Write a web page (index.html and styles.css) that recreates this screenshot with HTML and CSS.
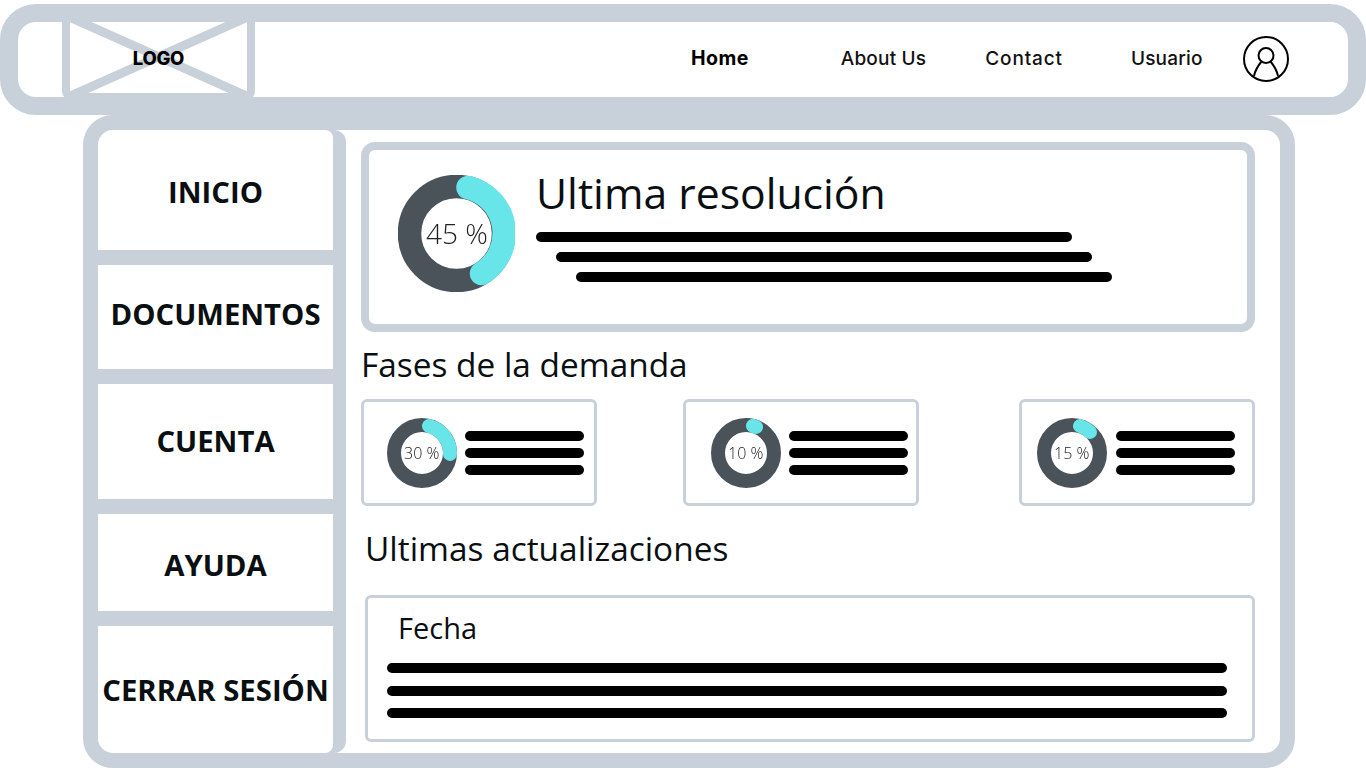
FILE: index.html
```html
<!DOCTYPE html>
<html lang="es">
<head>
<meta charset="UTF-8">
<title>Panel</title>
<link rel="stylesheet" href="styles.css">
</head>
<body>
<header class="topbar">
  <div class="logo">
    <svg class="logo-x" viewBox="0 0 177 71" width="177" height="71">
      <path d="M0 -4.7L177 74.2M177 -4.7L0 74.2"/>
    </svg>
    <span class="logo-text">LOGO</span>
  </div>
  <nav class="nav">
    <a class="nav-home">Home</a>
    <a class="nav-about">About Us</a>
    <a class="nav-contact">Contact</a>
    <a class="nav-user">Usuario</a>
  </nav>
  <svg class="user-icon" viewBox="0 0 48 48" width="48" height="48">
    <circle cx="24" cy="24" r="22"/>
    <circle cx="24" cy="20.5" r="7.5"/>
    <path d="M12 41C13.5 34 17 29.500 19.500 26.500M36 41C34.500 34 31 29.500 28.500 26.500"/>
  </svg>
</header>

<main class="frame">
  <aside class="side">
    <a class="side-item">INICIO</a>
    <a class="side-item">DOCUMENTOS</a>
    <a class="side-item">CUENTA</a>
    <a class="side-item">AYUDA</a>
    <a class="side-item">CERRAR SESIÓN</a>
  </aside>

  <section class="content">
    <div class="last-card">
      <div class="donut donut-big">
        <svg viewBox="0 0 117 117" width="117" height="117">
          <circle class="ring" cx="58.5" cy="58.5" r="47"/>
          <path class="arc" d="M70 12.500A47 47 0 0 1 83.500 98.500"/>
        </svg>
        <span class="donut-label">45 %</span>
      </div>
      <div class="last-text">
        <h1 class="last-title">Ultima resolución</h1>
        <div class="big-lines">
          <div class="line"></div>
          <div class="line line-in1"></div>
          <div class="line line-in2"></div>
        </div>
      </div>
    </div>

    <h2 class="section-title">Fases de la demanda</h2>
    <div class="phases">
      <div class="phase phase-a">
        <div class="donut donut-small">
          <svg viewBox="0 0 70 70" width="70" height="70">
            <circle class="ring" cx="35" cy="35" r="28"/>
            <path class="arc" d="M42 8A28 28 0 0 1 63 36"/>
          </svg>
          <span class="donut-label">30 %</span>
        </div>
        <div class="small-lines">
          <div class="line"></div>
          <div class="line"></div>
          <div class="line"></div>
        </div>
      </div>
      <div class="phase phase-b">
        <div class="donut donut-small">
          <svg viewBox="0 0 70 70" width="70" height="70">
            <circle class="ring" cx="35" cy="35" r="28"/>
            <path class="arc" d="M42 7.800A28 28 0 0 1 45 9"/>
          </svg>
          <span class="donut-label">10 %</span>
        </div>
        <div class="small-lines">
          <div class="line"></div>
          <div class="line"></div>
          <div class="line"></div>
        </div>
      </div>
      <div class="phase phase-c">
        <div class="donut donut-small">
          <svg viewBox="0 0 70 70" width="70" height="70">
            <circle class="ring" cx="35" cy="35" r="28"/>
            <path class="arc" d="M43 8A28 28 0 0 1 53 14"/>
          </svg>
          <span class="donut-label">15 %</span>
        </div>
        <div class="small-lines">
          <div class="line"></div>
          <div class="line"></div>
          <div class="line"></div>
        </div>
      </div>
    </div>

    <h2 class="section-title title-updates">Ultimas actualizaciones</h2>
    <div class="updates">
      <div class="updates-date">Fecha</div>
      <div class="updates-lines">
        <div class="line"></div>
        <div class="line"></div>
        <div class="line"></div>
      </div>
    </div>
  </section>
</main>
</body>
</html>
```
FILE: styles.css
```css
*{margin:0;padding:0;box-sizing:border-box}
html,body{height:768px;overflow:hidden;background:#fff}
body{font-family:"Open Sans",sans-serif;color:#0a0f12}

/* top bar */
.topbar{display:flex;align-items:center;height:111px;margin-top:4px;border:18px solid #c8d0da;border-radius:36px;background:#fff}
.logo{position:relative;display:flex;align-items:center;justify-content:center;flex:none;align-self:flex-start;width:193px;height:79px;margin:0 0 -4px 44px;border:8px solid #c8d0da;border-top-width:0;border-radius:0 0 10px 10px;background:#fff}
.logo-x{position:absolute;left:0;top:0;overflow:hidden}
.logo-x path{fill:none;stroke:#c8d0da;stroke-width:9}
.logo-text{position:relative;top:0;left:0;font:800 18.500px Inter,sans-serif;color:#000;letter-spacing:-.3px}
.nav{display:flex;align-items:center;margin:-3px 0 0 436px;font:500 19px Inter,sans-serif;letter-spacing:.2px;color:#111}
.nav-home{font-weight:700;font-size:19.500px;letter-spacing:.45px;color:#000}
.nav-about{margin-left:92px}
.nav-contact{margin-left:59px;letter-spacing:.85px}
.nav-user{margin-left:68px}
.user-icon{flex:none;margin:-1px 0 0 39px}
.user-icon circle,.user-icon path{fill:none;stroke:#000;stroke-width:2}

/* main frame */
.frame{display:flex;height:653px;width:1212px;margin-left:83px;border:15px solid #c8d0da;border-radius:30px;background:#fff;overflow:hidden}
.side{display:grid;grid-template-rows:120px 104px 115px 97px 127px;gap:15px;flex:none;width:248px;padding-right:13px;background:#c8d0da;border-radius:0 12px 12px 0}
.side-item{display:flex;align-items:center;justify-content:center;background:#fff;font-size:29.300px;font-weight:700;color:#0a0f12}
.side-item:nth-child(1){border-radius:0 8px 0 0;padding-top:4px}
.side-item:nth-child(2){padding-bottom:6px}
.side-item:nth-child(3){padding-bottom:2px}
.side-item:nth-child(4){padding-top:5px}
.side-item:nth-child(5){border-radius:0 0 8px 0}

.content{flex:1;padding:12px 25px 0 15px}
.last-card{display:flex;height:190px;border:8px solid #c8d0da;border-radius:14px}
.donut{position:relative;flex:none;display:flex;align-items:center;justify-content:center}
.donut svg{position:absolute;left:0;top:0}
.ring,.arc{fill:none}
.ring{stroke:#4a525a}
.arc{stroke:#68e5e9;stroke-linecap:round}
.donut-label{position:relative;font-weight:300;color:#222;white-space:nowrap;will-change:transform}
.donut-big{width:117px;height:117px;margin:25px 21px 0 29px}
.donut-big .ring,.donut-big .arc{stroke-width:23.5}
.donut-big .donut-label{font-size:28px;top:-1px}
.last-title{font-size:42.700px;font-weight:400;line-height:50px;margin-top:18px}
.big-lines{display:flex;flex-direction:column;gap:10px;margin-top:14px}
.line{height:10px;background:#000;border-radius:5px}
.big-lines .line{width:536px}
.line-in1{margin-left:20px}
.line-in2{margin-left:40px}

.section-title{font-size:33.400px;font-weight:400;line-height:40px;margin:12px 0 15px}
.title-updates{margin:22px 0 27px 4px}

.phases{display:flex}
.phase{display:flex;width:236px;height:107px;border:3px solid #c8d0da;border-radius:6px}
.phase-a{padding:16px 0 0 23px}
.phase-b{padding:16px 0 0 25px;margin-left:86px}
.phase-c{padding:16px 0 0 15px;margin-left:auto}
.donut-small{width:70px;height:70px;margin-right:8px}
.donut-small .ring,.donut-small .arc{stroke-width:14}
.donut-small .donut-label{font-size:16px}
.phase-c .donut-small{margin-right:9px}
.small-lines{display:flex;flex-direction:column;gap:7px;margin-top:13px}
.small-lines .line{width:119px}

.updates{height:147px;margin-left:4px;border:3px solid #c8d0da;border-radius:6px;padding:0 0 0 19px}
.updates-date{font-size:29px;line-height:40px;margin:10px 0 0 11px}
.updates-lines{display:flex;flex-direction:column;gap:12.5px;width:840px;margin-top:15px}
```
